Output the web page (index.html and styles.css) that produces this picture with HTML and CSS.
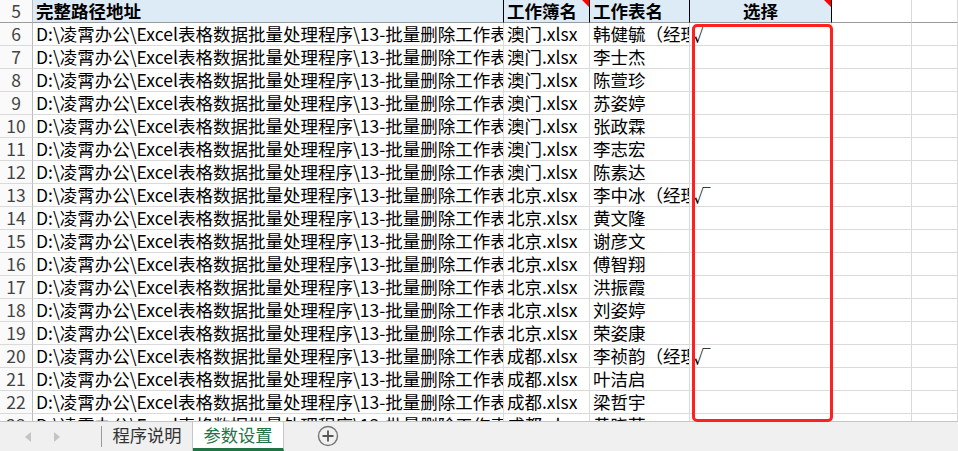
FILE: index.html
```html
<!DOCTYPE html>
<html lang="zh-CN">
<head>
  <meta charset="UTF-8" />
  <title>参数设置</title>
  <link rel="stylesheet" href="styles.css">
</head>
<body>
  <div class="sheet">
    <div class="row head">
      <div class="cell rh">5</div>
      <div class="cell ca">完整路径地址</div>
      <div class="cell cb note">工作簿名</div>
      <div class="cell cc">工作表名</div>
      <div class="cell cd note center">选择</div>
      <div class="cell ce"></div>
      <div class="cell cf"></div>
    </div>
    <div class="row">
      <div class="cell rh">6</div>
      <div class="cell ca">D:\凌霄办公\Excel表格数据批量处理程序\13-批量删除工作表\澳门.xlsx</div>
      <div class="cell cb">澳门.xlsx</div>
      <div class="cell cc">韩健毓（经理）</div>
      <div class="cell cd">√</div>
      <div class="cell ce"></div>
      <div class="cell cf"></div>
    </div>
    <div class="row">
      <div class="cell rh">7</div>
      <div class="cell ca">D:\凌霄办公\Excel表格数据批量处理程序\13-批量删除工作表\澳门.xlsx</div>
      <div class="cell cb">澳门.xlsx</div>
      <div class="cell cc">李士杰</div>
      <div class="cell cd"></div>
      <div class="cell ce"></div>
      <div class="cell cf"></div>
    </div>
    <div class="row">
      <div class="cell rh">8</div>
      <div class="cell ca">D:\凌霄办公\Excel表格数据批量处理程序\13-批量删除工作表\澳门.xlsx</div>
      <div class="cell cb">澳门.xlsx</div>
      <div class="cell cc">陈萱珍</div>
      <div class="cell cd"></div>
      <div class="cell ce"></div>
      <div class="cell cf"></div>
    </div>
    <div class="row">
      <div class="cell rh">9</div>
      <div class="cell ca">D:\凌霄办公\Excel表格数据批量处理程序\13-批量删除工作表\澳门.xlsx</div>
      <div class="cell cb">澳门.xlsx</div>
      <div class="cell cc">苏姿婷</div>
      <div class="cell cd"></div>
      <div class="cell ce"></div>
      <div class="cell cf"></div>
    </div>
    <div class="row">
      <div class="cell rh">10</div>
      <div class="cell ca">D:\凌霄办公\Excel表格数据批量处理程序\13-批量删除工作表\澳门.xlsx</div>
      <div class="cell cb">澳门.xlsx</div>
      <div class="cell cc">张政霖</div>
      <div class="cell cd"></div>
      <div class="cell ce"></div>
      <div class="cell cf"></div>
    </div>
    <div class="row">
      <div class="cell rh">11</div>
      <div class="cell ca">D:\凌霄办公\Excel表格数据批量处理程序\13-批量删除工作表\澳门.xlsx</div>
      <div class="cell cb">澳门.xlsx</div>
      <div class="cell cc">李志宏</div>
      <div class="cell cd"></div>
      <div class="cell ce"></div>
      <div class="cell cf"></div>
    </div>
    <div class="row">
      <div class="cell rh">12</div>
      <div class="cell ca">D:\凌霄办公\Excel表格数据批量处理程序\13-批量删除工作表\澳门.xlsx</div>
      <div class="cell cb">澳门.xlsx</div>
      <div class="cell cc">陈素达</div>
      <div class="cell cd"></div>
      <div class="cell ce"></div>
      <div class="cell cf"></div>
    </div>
    <div class="row">
      <div class="cell rh">13</div>
      <div class="cell ca">D:\凌霄办公\Excel表格数据批量处理程序\13-批量删除工作表\北京.xlsx</div>
      <div class="cell cb">北京.xlsx</div>
      <div class="cell cc">李中冰（经理）</div>
      <div class="cell cd">√</div>
      <div class="cell ce"></div>
      <div class="cell cf"></div>
    </div>
    <div class="row">
      <div class="cell rh">14</div>
      <div class="cell ca">D:\凌霄办公\Excel表格数据批量处理程序\13-批量删除工作表\北京.xlsx</div>
      <div class="cell cb">北京.xlsx</div>
      <div class="cell cc">黄文隆</div>
      <div class="cell cd"></div>
      <div class="cell ce"></div>
      <div class="cell cf"></div>
    </div>
    <div class="row">
      <div class="cell rh">15</div>
      <div class="cell ca">D:\凌霄办公\Excel表格数据批量处理程序\13-批量删除工作表\北京.xlsx</div>
      <div class="cell cb">北京.xlsx</div>
      <div class="cell cc">谢彦文</div>
      <div class="cell cd"></div>
      <div class="cell ce"></div>
      <div class="cell cf"></div>
    </div>
    <div class="row">
      <div class="cell rh">16</div>
      <div class="cell ca">D:\凌霄办公\Excel表格数据批量处理程序\13-批量删除工作表\北京.xlsx</div>
      <div class="cell cb">北京.xlsx</div>
      <div class="cell cc">傅智翔</div>
      <div class="cell cd"></div>
      <div class="cell ce"></div>
      <div class="cell cf"></div>
    </div>
    <div class="row">
      <div class="cell rh">17</div>
      <div class="cell ca">D:\凌霄办公\Excel表格数据批量处理程序\13-批量删除工作表\北京.xlsx</div>
      <div class="cell cb">北京.xlsx</div>
      <div class="cell cc">洪振霞</div>
      <div class="cell cd"></div>
      <div class="cell ce"></div>
      <div class="cell cf"></div>
    </div>
    <div class="row">
      <div class="cell rh">18</div>
      <div class="cell ca">D:\凌霄办公\Excel表格数据批量处理程序\13-批量删除工作表\北京.xlsx</div>
      <div class="cell cb">北京.xlsx</div>
      <div class="cell cc">刘姿婷</div>
      <div class="cell cd"></div>
      <div class="cell ce"></div>
      <div class="cell cf"></div>
    </div>
    <div class="row">
      <div class="cell rh">19</div>
      <div class="cell ca">D:\凌霄办公\Excel表格数据批量处理程序\13-批量删除工作表\北京.xlsx</div>
      <div class="cell cb">北京.xlsx</div>
      <div class="cell cc">荣姿康</div>
      <div class="cell cd"></div>
      <div class="cell ce"></div>
      <div class="cell cf"></div>
    </div>
    <div class="row">
      <div class="cell rh">20</div>
      <div class="cell ca">D:\凌霄办公\Excel表格数据批量处理程序\13-批量删除工作表\成都.xlsx</div>
      <div class="cell cb">成都.xlsx</div>
      <div class="cell cc">李祯韵（经理）</div>
      <div class="cell cd">√</div>
      <div class="cell ce"></div>
      <div class="cell cf"></div>
    </div>
    <div class="row">
      <div class="cell rh">21</div>
      <div class="cell ca">D:\凌霄办公\Excel表格数据批量处理程序\13-批量删除工作表\成都.xlsx</div>
      <div class="cell cb">成都.xlsx</div>
      <div class="cell cc">叶洁启</div>
      <div class="cell cd"></div>
      <div class="cell ce"></div>
      <div class="cell cf"></div>
    </div>
    <div class="row">
      <div class="cell rh">22</div>
      <div class="cell ca">D:\凌霄办公\Excel表格数据批量处理程序\13-批量删除工作表\成都.xlsx</div>
      <div class="cell cb">成都.xlsx</div>
      <div class="cell cc">梁哲宇</div>
      <div class="cell cd"></div>
      <div class="cell ce"></div>
      <div class="cell cf"></div>
    </div>
    <div class="row">
      <div class="cell rh">23</div>
      <div class="cell ca">D:\凌霄办公\Excel表格数据批量处理程序\13-批量删除工作表\成都.xlsx</div>
      <div class="cell cb">成都.xlsx</div>
      <div class="cell cc">黄晓萍</div>
      <div class="cell cd"></div>
      <div class="cell ce"></div>
      <div class="cell cf"></div>
    </div>
  </div>

  <div class="tabs">
    <div class="nav">
      <span class="arrow left"></span>
      <span class="arrow right"></span>
    </div>
    <div class="sep"></div>
    <div class="tab">程序说明</div>
    <div class="tab active">参数设置</div>
    <div class="add">
      <svg width="22" height="22" viewBox="0 0 22 22">
        <circle cx="11" cy="11" r="9.5" fill="none" stroke="#767676" stroke-width="1.4"/>
        <path d="M11 5.5v11M5.5 11h11" stroke="#555" stroke-width="1.8"/>
      </svg>
    </div>
  </div>

  <!-- highlight round the 选择 column -->
  <div class="mark"></div>
</body>
</html>
```

FILE: styles.css
```css
body {
  margin: 0;
  width: 958px;
  height: 451px;
  overflow: hidden;
  position: relative;
  background: #fff;
  color: #000;
  font-family: "Noto Sans CJK SC", sans-serif;
  font-size: 17.5px;
}

.sheet {
  height: 421px;
  overflow: hidden;
}

.row {
  display: flex;
  height: 23px;
}

.cell {
  flex: none;
  box-sizing: border-box;
  height: 23px;
  padding: 0 3px;
  line-height: 22px;
  white-space: nowrap;
  overflow: hidden;
  border-right: 1px solid #dadada;
  border-bottom: 1px solid #dadada;
  position: relative;
}

.rh {
  width: 33px;
  padding: 0;
  text-align: center;
  color: #444;
  background: #fafafa;
  border-right-color: #bcbcbc;
}

.ca { width: 471px; }
.cb { width: 86px; }
.cc { width: 100px; }
.cd { width: 142px; }
.ce { width: 80px; }
.cf { flex: 1; }

.center { text-align: center; }

.head .cell {
  font-weight: 700;
  border-bottom-color: #9a9a9a;
}

.head .ca, .head .cb, .head .cc, .head .cd {
  background: #ddebf7;
  border-right-color: #000;
}

.head .rh {
  font-weight: 400;
}

.note::after {
  content: "";
  position: absolute;
  top: 0;
  right: 0;
  border-left: 7px solid transparent;
  border-top: 7px solid #ff0000;
}

.tabs {
  display: flex;
  height: 29px;
  background: #f0f0f0;
  border-top: 1px solid #c6c6c6;
  font-size: 17.3px;
}

.nav {
  width: 101px;
  display: flex;
  align-items: center;
  gap: 23px;
  padding-left: 25px;
  box-sizing: border-box;
}

.arrow {
  width: 0;
  height: 0;
  border-top: 5px solid transparent;
  border-bottom: 5px solid transparent;
}

.arrow.left { border-right: 6px solid #c4c4c4; }
.arrow.right { border-left: 6px solid #c4c4c4; }

.sep {
  width: 1px;
  margin: 4px 0 4px;
  background: #9a9a9a;
}

.tab {
  width: 91px;
  box-sizing: border-box;
  text-align: center;
  line-height: 26px;
  color: #333;
  border-right: 1px solid #c6c6c6;
}

.tab.active {
  background: #fff;
  color: #217346;
  border-bottom: 3px solid #217346;
}

.add {
  display: flex;
  align-items: center;
  padding-left: 33px;
  padding-bottom: 1px;
}

.add svg {
  display: block;
}

.mark {
  position: absolute;
  left: 692px;
  top: 24px;
  width: 141px;
  height: 398px;
  box-sizing: border-box;
  border: 3.5px solid #ff2020;
  border-radius: 5px;
}
```
